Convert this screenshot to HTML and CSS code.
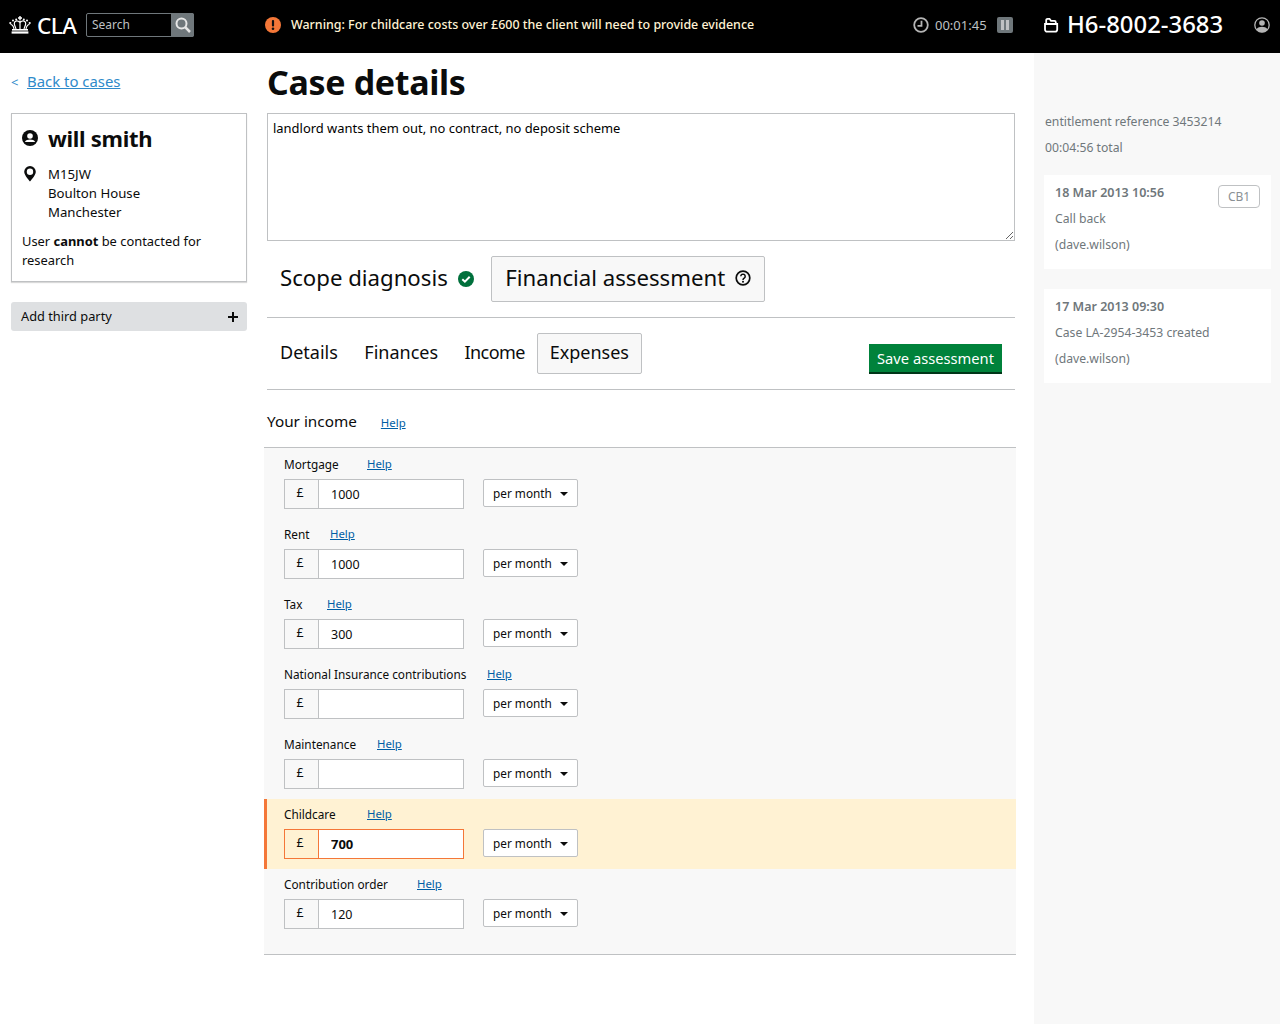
FILE: index.html
```html
<!doctype html>
<html>
<head>
    <meta charset="UTF-8">
    <title>CLA | Case details</title>
    <link rel="stylesheet" href="styles.css">
</head>
<body>
    <header class="topbar">
        <div class="brand">
            <svg class="crown" width="22" height="18" viewBox="0 0 22 18">
                <g fill="#fff">
                    <path d="M10.300 0h1.400v1.300H13v1.400h-1.300V4h-1.400V2.700H9V1.300h1.300z"/>
                    <circle cx="1.300" cy="7" r="1.100"/><circle cx="20.700" cy="7" r="1.100"/>
                    <circle cx="4" cy="4.600" r="1"/><circle cx="18" cy="4.600" r="1"/>
                    <circle cx="7.200" cy="3.500" r="1"/><circle cx="14.800" cy="3.500" r="1"/>
                    <rect x="3" y="13" width="16" height="1.600"/>
                    <rect x="2.600" y="15.400" width="16.800" height="2.200"/>
                </g>
                <g fill="none" stroke="#fff" stroke-width="1.200">
                    <path d="M11 4.500v8.500M11 6.500C8 3.800 5 5 5.300 7.800c.2 1.700 1.200 3.500 1.700 5.200M11 6.500c3-2.700 6-1.500 5.700 1.300-.2 1.700-1.200 3.500-1.700 5.200"/>
                    <path d="M1.500 8.500c1.800 0 2.800 1 3.500 4.500M20.500 8.500c-1.800 0-2.800 1-3.500 4.500"/>
                </g>
            </svg>
            <span class="logo">CLA</span>
        </div>
        <form class="search">
            <span class="search-text">Search</span>
            <span class="search-btn">
                <svg width="16" height="16" viewBox="0 0 16 16" fill="none" stroke="#e6e6e6" stroke-width="2"><circle cx="6.500" cy="6.500" r="5"/><path d="M10.200 10.200L15 15" stroke-width="2.500"/></svg>
            </span>
        </form>
        <div class="alert">
            <svg width="16" height="16" viewBox="0 0 16 16"><circle cx="8" cy="8" r="8" fill="#f47738"/><rect x="6.900" y="3" width="2.200" height="6.500" rx="1" fill="#111"/><circle cx="8" cy="11.800" r="1.300" fill="#111"/></svg>
            <span class="alert-text">Warning: For childcare costs over £600 the client will need to provide evidence</span>
        </div>
        <div class="timer">
            <svg width="16" height="16" viewBox="0 0 16 16" fill="none" stroke="#b5b5b5" stroke-width="1.800"><circle cx="8" cy="8" r="6.800"/><path d="M8.500 3.800V8.800H4.500"/></svg>
            <span>00:01:45</span>
            <span class="pause"><i></i><i></i></span>
        </div>
        <div class="case-ref">
            <svg width="16" height="16" viewBox="0 0 16 16" fill="none" stroke="#fff" stroke-width="1.800"><path d="M2 7h12.200v5.500a2.200 2.200 0 0 1-2.200 2.200H4.200A2.200 2.200 0 0 1 2 12.500z"/><path d="M3.200 6.800V3.200a1.400 1.400 0 0 1 1.400-1.400h1.900L8 3.800h3.400a1.400 1.400 0 0 1 1.400 1.400v1.600"/></svg>
            <span class="case-number">H6-8002-3683</span>
        </div>
        <svg class="user-icon" width="16" height="16" viewBox="0 0 16 16"><circle cx="8" cy="8" r="7.200" fill="none" stroke="#b5b5b5" stroke-width="1.300"/><circle cx="8" cy="6" r="2.800" fill="#b5b5b5"/><path d="M2.400 12.400C3.800 10.400 6 9.800 8 9.800s4.200.6 5.600 2.600A7 7 0 0 1 8 15.200a7 7 0 0 1-5.600-2.800z" fill="#b5b5b5"/></svg>
    </header>

    <div class="page">
        <aside class="left">
            <p class="back"><span class="back-arrow">&lt;</span><a href="#">Back to cases</a></p>
            <div class="client-card">
                <h2>
                    <svg width="16" height="16" viewBox="0 0 16 16"><circle cx="8" cy="8" r="8" fill="#0b0c0c"/><circle cx="8" cy="6" r="2.800" fill="#fff"/><path d="M2.800 12c1-1.800 3-2.500 5.200-2.500s4.200.7 5.200 2.500z" fill="#fff"/></svg>
                    will smith
                </h2>
                <div class="address">
                    <svg width="16" height="18" viewBox="0 0 16 18"><path d="M8 1a5.800 5.800 0 0 0-5.800 5.800C2.200 10.500 8 16.500 8 16.500s5.800-6 5.800-9.700A5.800 5.800 0 0 0 8 1z" fill="#0b0c0c"/><circle cx="8" cy="6.800" r="3.200" fill="#fff"/></svg>
                    <p>M15JW<br>Boulton House<br>Manchester</p>
                </div>
                <p class="contact">User <strong>cannot</strong> be contacted for research</p>
            </div>
            <div class="third-party">
                <span class="third-party-text">Add third party</span>
                <span class="plus"></span>
            </div>
        </aside>

        <main class="main">
            <h1>Case details</h1>
            <textarea class="notes">landlord wants them out, no contract, no deposit scheme</textarea>

            <nav class="steps">
                <span class="step">Scope diagnosis
                    <svg width="16" height="16" viewBox="0 0 16 16"><circle cx="8" cy="8" r="8" fill="#00703c"/><path d="M4.300 8.200l2.600 2.500 4.800-5" fill="none" stroke="#fff" stroke-width="2"/></svg>
                </span>
                <span class="step active">Financial assessment
                    <svg width="16" height="16" viewBox="0 0 16 16"><circle cx="8" cy="8" r="6.800" fill="none" stroke="#0b0c0c" stroke-width="1.700"/><path d="M5.800 6.300a2.200 2.200 0 1 1 3.400 1.900c-.8.500-1.200.9-1.200 1.700" fill="none" stroke="#0b0c0c" stroke-width="1.500"/><circle cx="8" cy="11.700" r="1" fill="#0b0c0c"/></svg>
                </span>
            </nav>

            <div class="tabs">
                <span class="tab">Details</span>
                <span class="tab">Finances</span>
                <span class="tab tab-income">Income</span>
                <span class="tab active">Expenses</span>
                <button type="button" class="save">Save assessment</button>
            </div>

            <div class="section-title">
                <h3>Your income</h3>
                <a href="#">Help</a>
            </div>

            <div class="fields">
                <div class="field">
                    <div class="field-label"><label class="label-mortgage">Mortgage</label><a href="#">Help</a></div>
                    <div class="field-row">
                        <span class="pound">£</span><input class="amount" type="text" value="1000">
                        <span class="period">per month<i class="caret"></i></span>
                    </div>
                </div>
                <div class="field">
                    <div class="field-label"><label class="label-rent">Rent</label><a href="#">Help</a></div>
                    <div class="field-row">
                        <span class="pound">£</span><input class="amount" type="text" value="1000">
                        <span class="period">per month<i class="caret"></i></span>
                    </div>
                </div>
                <div class="field">
                    <div class="field-label"><label class="label-tax">Tax</label><a href="#">Help</a></div>
                    <div class="field-row">
                        <span class="pound">£</span><input class="amount" type="text" value="300">
                        <span class="period">per month<i class="caret"></i></span>
                    </div>
                </div>
                <div class="field">
                    <div class="field-label"><label class="label-ni">National Insurance contributions</label><a href="#">Help</a></div>
                    <div class="field-row">
                        <span class="pound">£</span><input class="amount" type="text" value="">
                        <span class="period">per month<i class="caret"></i></span>
                    </div>
                </div>
                <div class="field">
                    <div class="field-label"><label class="label-maintenance">Maintenance</label><a href="#">Help</a></div>
                    <div class="field-row">
                        <span class="pound">£</span><input class="amount" type="text" value="">
                        <span class="period">per month<i class="caret"></i></span>
                    </div>
                </div>
                <div class="field warn">
                    <div class="field-label"><label class="label-childcare">Childcare</label><a href="#">Help</a></div>
                    <div class="field-row">
                        <span class="pound">£</span><input class="amount" type="text" value="700">
                        <span class="period">per month<i class="caret"></i></span>
                    </div>
                </div>
                <div class="field">
                    <div class="field-label"><label class="label-order">Contribution order</label><a href="#">Help</a></div>
                    <div class="field-row">
                        <span class="pound">£</span><input class="amount" type="text" value="120">
                        <span class="period">per month<i class="caret"></i></span>
                    </div>
                </div>
            </div>
        </main>

        <aside class="history">
            <p>entitlement reference 3453214</p>
            <p>00:04:56 total</p>
            <div class="event">
                <span class="code">CB1</span>
                <strong>18 Mar 2013 10:56</strong>
                <p>Call back</p>
                <p>(dave.wilson)</p>
            </div>
            <div class="event">
                <strong>17 Mar 2013 09:30</strong>
                <p>Case LA-2954-3453 created</p>
                <p>(dave.wilson)</p>
            </div>
        </aside>
    </div>
</body>
</html>
```

FILE: styles.css
```css
* {
    box-sizing: border-box;
}
html, body {
    height: 100%;
}
body {
    margin: 0;
    font-family: "Noto Sans", "Open Sans", sans-serif;
    font-size: 14px;
    color: #0b0c0c;
    background-color: #fff;
    overflow: hidden;
}
a {
    color: #005ea5;
}
p {
    margin: 0;
}

/* top bar */
.topbar {
    display: flex;
    align-items: center;
    height: 53px;
    background-color: #000;
    color: #fff;
    padding: 0 0 3px 9px;
}
.brand {
    display: flex;
    align-items: center;
    gap: 6px;
    width: 77px;
}
.logo {
    font-size: 22.500px;
    font-weight: 500;
    letter-spacing: -0.5px;
}
.search {
    display: flex;
    width: 108px;
    height: 24px;
    border: 1px solid #6f777b;
    border-radius: 2px;
}
.search-text {
    flex: 1;
    font-size: 12px;
    line-height: 22px;
    padding-left: 5px;
    color: #bfc1c3;
}
.search-btn {
    display: flex;
    align-items: center;
    justify-content: center;
    width: 23px;
    margin: -1px -1px -1px 0;
    background-color: #6f777b;
    border-radius: 0 2px 2px 0;
}
.alert {
    display: flex;
    align-items: center;
    gap: 10px;
    margin-left: 71px;
    width: 648px;
    font-size: 12.450px;
    font-weight: 500;
    color: #fff2d3;
}
.alert-text {
    margin-top: -2px;
}
.timer {
    display: flex;
    align-items: center;
    gap: 6px;
    width: 130px;
    font-size: 13px;
    color: #bfc1c3;
}
.pause {
    display: flex;
    justify-content: center;
    gap: 2px;
    width: 16px;
    height: 16px;
    padding: 3px 0;
    margin-left: 4px;
    background-color: #6f777b;
    border-radius: 2px;
}
.pause i {
    width: 3px;
    background-color: #bfc1c3;
}
.case-ref {
    display: flex;
    align-items: center;
    gap: 8px;
    width: 211px;
    font-size: 23.900px;
    font-weight: 500;
}
.case-number {
    margin-top: -3px;
}

/* columns */
.page {
    display: flex;
    height: 971px;
}
.left {
    width: 264px;
    padding: 0 17px 0 11px;
    flex-shrink: 0;
}
.back {
    margin-top: 18px;
    font-size: 14.900px;
    line-height: 20px;
    color: #2e8aca;
}
.back a {
    color: #2e8aca;
}
.back-arrow {
    display: inline-block;
    width: 16px;
    font-size: 13px;
}
.client-card {
    margin-top: 21px;
    padding: 9px 10px 11px;
    border: 1px solid #bfc1c3;
    box-shadow: 0 1px 1px rgba(0, 0, 0, 0.15);
    font-size: 13.200px;
    line-height: 19px;
}
.client-card h2 {
    display: flex;
    align-items: center;
    gap: 10px;
    margin: 0 0 12px;
    font-size: 22px;
    line-height: 30px;
    font-weight: 700;
    letter-spacing: -0.3px;
}
.address {
    display: flex;
    gap: 10px;
    margin-bottom: 10px;
}
.contact {
    font-size: 12.900px;
}
.third-party {
    display: flex;
    justify-content: space-between;
    align-items: center;
    margin-top: 20px;
    height: 29px;
    padding: 0 9px 0 10px;
    background-color: #dee0e2;
    border-radius: 3px;
    font-size: 12.800px;
}
.third-party-text {
    margin-top: -2px;
}
.plus {
    width: 10px;
    height: 10px;
    background:
        linear-gradient(#0b0c0c, #0b0c0c) center / 10px 2px no-repeat,
        linear-gradient(#0b0c0c, #0b0c0c) center / 2px 10px no-repeat;
}

/* main column */
.main {
    width: 752px;
    flex-shrink: 0;
}
.main h1 {
    margin: 8px 0 0 3px;
    font-size: 34px;
    line-height: 42px;
    font-weight: 700;
    letter-spacing: -0.35px;
}
.notes {
    display: block;
    width: 748px;
    height: 128px;
    margin: 10px 0 0 3px;
    padding: 5px;
    border: 1px solid #bfc1c3;
    font-family: inherit;
    font-size: 12.950px;
    line-height: 19px;
    color: #000;
}
.steps {
    display: flex;
    align-items: center;
    gap: 17.500px;
    width: 748px;
    height: 77px;
    margin-left: 3px;
    padding: 0 0 0 13px;
    border-bottom: 1px solid #bfc1c3;
    font-size: 22.200px;
}
.step {
    display: flex;
    align-items: center;
    gap: 10px;
    margin-top: -3px;
}
.step svg {
    margin-top: 2px;
}
.step.active {
    height: 46px;
    margin-top: 0;
    padding: 0 13px 4px;
    background-color: #f8f8f8;
    border: 1px solid #bfc1c3;
    border-radius: 2px;
}
.tabs {
    display: flex;
    align-items: center;
    gap: 26.500px;
    width: 748px;
    height: 72px;
    margin-left: 3px;
    padding: 0 13px;
    border-bottom: 1px solid #bfc1c3;
    font-size: 18px;
}
.tab {
    margin-top: -3px;
}
.tab-income {
    letter-spacing: -0.6px;
}
.tab.active {
    margin-top: 0;
    margin-left: -14.500px;
    padding: 0 12px;
    height: 41px;
    line-height: 37px;
    background-color: #f8f8f8;
    border: 1px solid #bfc1c3;
    border-radius: 2px;
}
.save {
    margin-left: auto;
    margin-top: 10px;
    height: 30px;
    width: 133px;
    padding: 0;
    background-color: #00823b;
    color: #fff;
    border: none;
    border-bottom: 2px solid #003618;
    font-family: inherit;
    font-size: 14.700px;
}
.section-title {
    display: flex;
    align-items: baseline;
    gap: 24px;
    height: 57px;
    margin-left: 3px;
    padding-top: 20px;
}
.section-title h3 {
    margin: 0;
    font-size: 15.300px;
    line-height: 22px;
    font-weight: 400;
}
.section-title a,
.field-label a {
    font-size: 11.400px;
}
.field-label a {
    margin-top: -2px;
}
.fields {
    border-top: 1px solid #bfc1c3;
    border-bottom: 1px solid #bfc1c3;
    background-color: #f8f8f8;
    padding: 1px 0 15px;
}
.field {
    height: 70px;
    padding: 5px 0 0 20px;
}
.field-label {
    display: flex;
    align-items: center;
    height: 20px;
    margin-bottom: 5px;
    font-size: 11.800px;
}
/* help link sits at a different offset for each label */
.label-mortgage, .label-childcare { width: 83px; }
.label-rent { width: 46px; }
.label-tax { width: 43px; }
.label-ni { width: 203px; }
.label-maintenance { width: 93px; }
.label-order { width: 133px; }
.field-row {
    display: flex;
    align-items: flex-start;
}
.pound {
    width: 34px;
    height: 30px;
    padding-right: 3px;
    line-height: 26px;
    text-align: center;
    font-size: 12.500px;
    border: 1px solid #bfc1c3;
    border-right: 0;
}
.amount {
    width: 146px;
    height: 30px;
    padding: 0 12px;
    background-color: #fff;
    border: 1px solid #bfc1c3;
    border-radius: 0;
    font-family: inherit;
    font-size: 12.500px;
    color: #0b0c0c;
}
.period {
    display: flex;
    align-items: center;
    justify-content: space-between;
    width: 95px;
    height: 28px;
    margin-left: 19px;
    padding: 0 9px 0 9px;
    background-color: #fff;
    border: 1px solid #bfc1c3;
    border-radius: 2px;
    font-size: 11.800px;
}
.caret {
    width: 0;
    height: 0;
    margin-top: 2px;
    border-left: 4px solid transparent;
    border-right: 4px solid transparent;
    border-top: 4px solid #0b0c0c;
}
.warn {
    background-color: #fff2d3;
    border-left: 3px solid #f47738;
    padding-left: 17px;
}
.warn .pound,
.warn .amount {
    border-color: #f47738;
}
.warn .amount {
    font-size: 13px;
    font-weight: 700;
}

/* history column */
.history {
    width: 246px;
    margin-left: 18px;
    padding: 56px 9px 0 11px;
    background-color: #f8f8f8;
    color: #6f777b;
    font-size: 12.200px;
    line-height: 26px;
}
.event {
    position: relative;
    width: 227px;
    height: 94px;
    margin: 14px 0 20px -1px;
    padding: 5px 11px;
    background-color: #fff;
}
.event strong {
    font-size: 12.500px;
    font-weight: 600;
}
.code {
    position: absolute;
    top: 10px;
    right: 11px;
    width: 42px;
    height: 23px;
    line-height: 21px;
    text-align: center;
    font-size: 12px;
    color: #8a9094;
    border: 1px solid #bfc1c3;
    border-radius: 4px;
}
```
